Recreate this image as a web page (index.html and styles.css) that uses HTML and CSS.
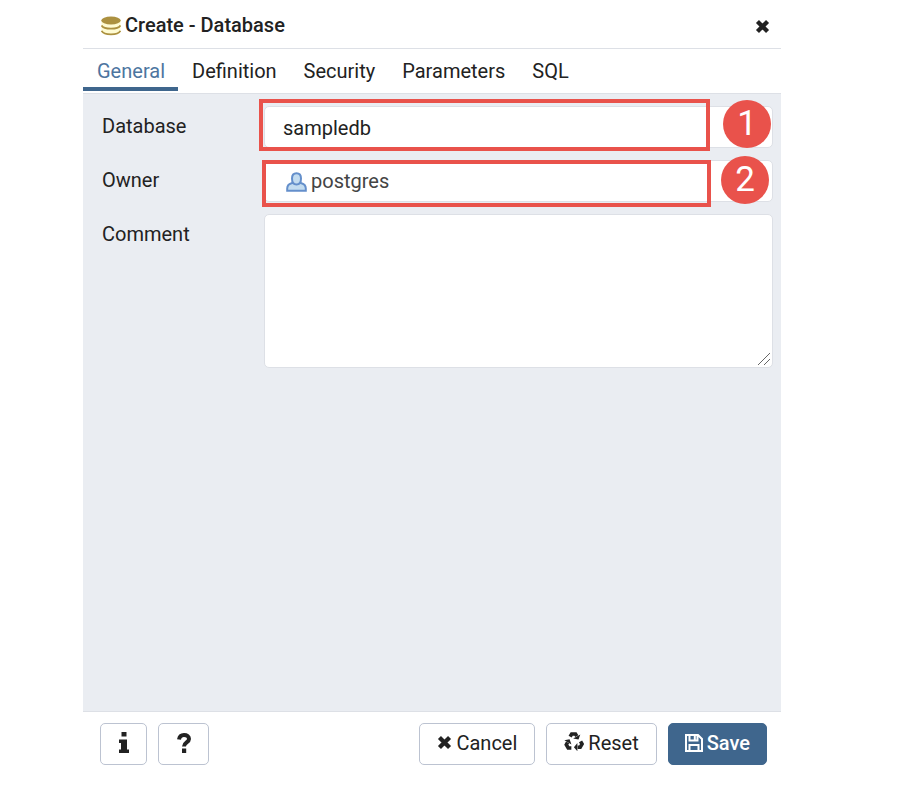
FILE: index.html
```html
<!DOCTYPE html>
<html lang="en">
    <head>
        <meta charset="utf-8">
        <title>Create - Database</title>
        <link rel="stylesheet" href="styles.css">
    </head>
    <body>
        <form class="dialog">
            <header class="dialog-header">
                <svg class="icon-database" viewBox="0 0 20 20" aria-hidden="true">
                    <path d="M.5 4v11.500c0 2 4 3.500 9.500 3.500s9.500-1.500 9.500-3.500V4z" fill="#fffbd2"/>
                    <ellipse cx="10" cy="4.500" rx="9.700" ry="4" fill="#ac9140"/>
                    <path d="M.6 9.500c1 2 4.900 3.200 9.400 3.200s8.400-1.200 9.400-3.200M.6 14.800c1 2.200 4.900 3.500 9.400 3.500s8.400-1.300 9.400-3.500" fill="none" stroke="#ac9140" stroke-width="1.700"/>
                </svg>
                <h1 class="dialog-title">Create - Database</h1>
                <button type="button" class="close" aria-label="Close">
                    <svg class="icon-times" viewBox="0 0 14 14"><path d="M2.300 2.300l9.400 9.400M11.700 2.300l-9.400 9.400"/></svg>
                </button>
            </header>
            <nav class="tabs">
                <a href="#general" class="tab active">General</a>
                <a href="#definition" class="tab">Definition</a>
                <a href="#security" class="tab">Security</a>
                <a href="#parameters" class="tab">Parameters</a>
                <a href="#sql" class="tab">SQL</a>
            </nav>
            <main class="fields" id="general">
                <label for="database">Database</label>
                <div class="field">
                    <input type="text" id="database" class="control" value="sampledb">
                    <span class="highlight highlight-database"></span>
                    <span class="badge badge-database">1</span>
                </div>
                <label for="owner">Owner</label>
                <div class="field">
                    <select id="owner" class="control owner">
                        <option>postgres</option>
                    </select>
                    <svg class="icon-user" viewBox="0 0 21 20" aria-hidden="true">
                        <path d="M1.200 18.800v-2.300c0-3 2-4.800 5-5.500h8.600c3 .7 5 2.500 5 5.500v2.300z"/>
                        <path d="M10.500 1.200c3.200 0 4.500 2 4.500 5.300s-1.500 6-4.500 6-4.500-2.700-4.500-6 1.300-5.300 4.500-5.300z"/>
                    </svg>
                    <span class="highlight highlight-owner"></span>
                    <span class="badge badge-owner">2</span>
                </div>
                <label for="comment">Comment</label>
                <div class="field">
                    <textarea id="comment" class="control comment"></textarea>
                    <svg class="grip" viewBox="0 0 14 14" aria-hidden="true"><path d="M1 13L13 1M7 13l6-6"/></svg>
                </div>
            </main>
            <footer class="dialog-footer">
                <button type="button" class="btn btn-info" aria-label="Information">
                    <svg class="icon-info" viewBox="0 0 10 21"><path d="M2.500 0h5v4.500h-5zM0 7.500h8V17.500h2V21H0v-3.500h2V11H0z"/></svg>
                </button>
                <button type="button" class="btn btn-help" aria-label="Help">
                    <svg class="icon-help" viewBox="0 0 14 20"><path d="M2 6.500C2.500 3.500 4.300 2 7 2c3 0 5 1.500 5 4 0 3.500-5 3.500-5 7.500" fill="none" stroke="currentColor" stroke-width="4"/><path d="M5 15.500h4.200V20H5z"/></svg>
                </button>
                <button type="button" class="btn btn-cancel">
                    <svg class="icon-times" viewBox="0 0 14 14"><path d="M2.300 2.300l9.400 9.400M11.700 2.300l-9.400 9.400"/></svg>
                    Cancel
                </button>
                <button type="reset" class="btn">
                    <svg class="icon-recycle" viewBox="0 0 20 20">
                        <defs>
                            <g id="arrow">
                                <path d="M6.100 5.700L7.700 3H11.500l1.300 2.200" fill="none" stroke="currentColor" stroke-width="3.600"/>
                                <path d="M16.300 3.500l-1.800 5-5.300-.9z"/>
                            </g>
                        </defs>
                        <use href="#arrow"/>
                        <use href="#arrow" transform="rotate(120 10 11)"/>
                        <use href="#arrow" transform="rotate(240 10 11)"/>
                    </svg>
                    Reset
                </button>
                <button type="submit" class="btn btn-primary">
                    <svg class="icon-save" viewBox="0 0 18 18"><path d="M1 1h12l4 4v12H1zM4.500 1v5.500h8V1M4.500 17v-6h9v6M9.800 2v3.500"/></svg>
                    Save
                </button>
            </footer>
        </form>
    </body>
</html>
```
FILE: styles.css
```css
* {
    box-sizing: border-box;
}
body {
    margin: 0;
    padding: 4px 133px 25px 83px;
    min-height: 100vh;
    display: flex;
    background: #fff;
    color: #222;
    font-family: Roboto, sans-serif;
    font-size: 20px;
    line-height: 24px;
}
.dialog {
    flex: 1;
    display: flex;
    flex-direction: column;
}
.dialog-header {
    display: flex;
    align-items: center;
    height: 45px;
    padding: 0 11px 0 18px;
    border-bottom: 1px solid #dde0e6;
}
.dialog-title {
    margin: 0 auto 2px 4px;
    font-size: 20px;
    font-weight: 500;
}
.close {
    display: flex;
    padding: 0;
    border: 0;
    background: none;
    color: #222;
}
.tabs {
    display: flex;
    height: 45px;
    border-bottom: 1px solid #dde0e6;
}
.tab {
    padding: 10px 13px 0 14px;
    border-bottom: 4px solid transparent;
    margin-bottom: 2px;
    color: #222;
    text-decoration: none;
}
.tab.active {
    border-color: #3f668d;
    color: #4d759f;
}
.fields {
    flex: 1;
    display: grid;
    grid-template-columns: 162px 1fr;
    align-content: start;
    gap: 12px 0;
    padding: 12px 8px 12px 19px;
    background: #eaedf2;
}
.fields label {
    padding-top: 8px;
}
.field {
    position: relative;
    display: flex;
}
.control {
    width: 100%;
    height: 42px;
    padding: 2px 18px 0;
    border: 1px solid #dde0e6;
    border-radius: 5px;
    background: #fff;
    color: #222;
    font: inherit;
    outline: none;
}
.owner {
    appearance: none;
    padding: 0 46px;
    color: #444;
}
.comment {
    height: 154px;
    padding: 8px 18px;
    resize: vertical;
}
.comment::-webkit-resizer {
    background: transparent;
}
.grip {
    position: absolute;
    right: 2px;
    bottom: 2px;
    width: 14px;
    height: 14px;
    stroke: #666;
    pointer-events: none;
}
.highlight {
    position: absolute;
    border: 4px solid #e9524b;
    pointer-events: none;
}
.highlight-database {
    inset: -7px 63px -3px -5px;
}
.highlight-owner {
    inset: 0 62px -5px -2px;
}
.badge {
    position: absolute;
    width: 48px;
    height: 48px;
    border-radius: 50%;
    background: #e9524b;
    color: #fff;
    font-size: 35px;
    line-height: 48px;
    text-align: center;
}
.badge-database {
    top: -6px;
    right: 2px;
}
.badge-owner {
    top: -4px;
    right: 4px;
}
.dialog-footer {
    display: flex;
    gap: 11px;
    padding: 11px 14px 10px 17px;
    border-top: 1px solid #dde0e6;
}
.btn {
    display: flex;
    align-items: center;
    justify-content: center;
    gap: 4px;
    height: 42px;
    padding: 0 17px 3px;
    border: 1px solid #bcc3d1;
    border-radius: 5px;
    background: #fff;
    color: #222;
    font: inherit;
}
.btn-info {
    width: 47px;
}
.btn-help {
    width: 51px;
}
.btn-cancel {
    margin-left: auto;
}
.btn-primary {
    padding: 0 16px 3px;
    border-color: #3f668d;
    background: #3f668d;
    color: #fff;
    font-weight: 500;
}
svg {
    flex: none;
    fill: currentColor;
}
.icon-database {
    width: 20px;
    height: 20px;
}
.icon-times {
    width: 15px;
    height: 15px;
    stroke: currentColor;
    stroke-width: 4;
}
.icon-user {
    position: absolute;
    top: 12px;
    left: 22px;
    width: 21px;
    height: 20px;
    fill: #c3dcf0;
    stroke: #648fcb;
    stroke-width: 2;
}
.icon-info {
    width: 10px;
    height: 21px;
}
.icon-help {
    width: 14px;
    height: 20px;
}
.icon-recycle {
    width: 20px;
    height: 20px;
    margin-bottom: 3px;
}
.icon-save {
    width: 18px;
    height: 18px;
    fill: none;
    stroke: currentColor;
    stroke-width: 2;
}
```
